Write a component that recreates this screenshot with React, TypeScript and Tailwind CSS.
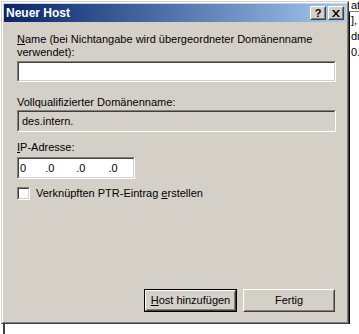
import React from 'react';

const font = "font-['Tahoma','Liberation_Sans',sans-serif]";

// Sunken 3D edit field (Win2000 look)
const Sunken: React.FC<{ className?: string; inner?: string; children?: React.ReactNode }> = ({
  className = '',
  inner = 'bg-white',
  children,
}) => (
  <div
    className={`border border-t-[#808080] border-l-[#808080] border-b-white border-r-white ${className}`}
  >
    <div
      className={`h-full w-full border border-t-[#404040] border-l-[#404040] border-b-[#d4d0c8] border-r-[#d4d0c8] ${inner}`}
    >
      {children}
    </div>
  </div>
);

const Raised: React.FC<{ className?: string; children?: React.ReactNode }> = ({ className = '', children }) => (
  <div
    className={`border border-t-white border-l-white border-b-[#404040] border-r-[#404040] bg-[#d4d0c8] ${className}`}
  >
    <div className="flex h-full w-full items-center justify-center border border-t-[#d4d0c8] border-l-[#d4d0c8] border-b-[#808080] border-r-[#808080]">
      {children}
    </div>
  </div>
);

const TitleButton: React.FC<{ children: React.ReactNode }> = ({ children }) => (
  <Raised className="h-[14px] w-[16px]">{children}</Raised>
);

export default function App() {
  return (
    <div className={`relative h-[334px] w-[359px] overflow-hidden bg-white text-[11px] text-black ${font}`}>
      <div className="flex">
        {/* dialog frame */}
        <div className="mt-[1px] ml-[1px] h-[323px] w-[348px] border border-t-[#d4d0c8] border-l-[#d4d0c8] border-b-[#404040] border-r-[#404040]">
          <div className="flex h-full w-full flex-col border border-t-white border-l-white border-b-[#808080] border-r-[#808080] bg-[#d4d0c8] p-[1px]">
            {/* title bar */}
            <div className="flex h-[18px] items-center bg-gradient-to-r from-[#0a246a] to-[#a6caf0] pl-[2px] pr-[2px]">
              <span className="text-[12px] font-bold text-white">Neuer Host</span>
              <div className="ml-auto flex gap-[2px]">
                <TitleButton>
                  <span className="text-[11px] font-bold leading-none">?</span>
                </TitleButton>
                <TitleButton>
                  <svg width="8" height="7" viewBox="0 0 8 7">
                    <path d="M0 0h2l2 2.5L6 0h2L5 3.5 8 7H6L4 4.5 2 7H0l3-3.5z" fill="#000" />
                  </svg>
                </TitleButton>
              </div>
            </div>

            {/* body */}
            <div className="flex flex-1 flex-col pl-[13px] pr-[11px] pb-[9px]">
              <div className="mt-[11px] leading-[13px]">
                <span className="underline">N</span>ame (bei Nichtangabe wird übergeordneter Domänenname
                <br />
                verwendet):
              </div>
              <Sunken className="mt-[2px] h-[21px] w-[319px]" />

              <div className="mt-[14px] leading-[13px]">Vollqualifizierter Domänenname:</div>
              <Sunken className="mt-[1px] h-[22px] w-[319px]" inner="bg-[#d4d0c8] flex items-center pl-[3px]">
                des.intern.
              </Sunken>

              <div className="mt-[9px] leading-[13px]">
                <span className="underline">I</span>P-Adresse:
              </div>
              <Sunken className="mt-[3px] h-[22px] w-[118px]" inner="bg-white flex items-center">
                <span className="ml-[1px]">0</span>
                <span className="ml-[19px]">.0</span>
                <span className="ml-[22px]">.0</span>
                <span className="ml-[23px]">.0</span>
              </Sunken>

              <div className="mt-[8px] flex items-center gap-[6px]">
                <Sunken className="h-[13px] w-[13px]" />
                <span className="leading-[13px]">
                  Verknüpften PTR-Eintrag <span className="underline">e</span>rstellen
                </span>
              </div>

              <div className="mt-auto flex justify-end gap-[6px]">
                <div className="h-[23px] w-[93px] border border-black">
                  <Raised className="h-full w-full">
                    <span>
                      <span className="underline">H</span>ost hinzufügen
                    </span>
                  </Raised>
                </div>
                <Raised className="h-[23px] w-[92px]">Fertig</Raised>
              </div>
            </div>
          </div>
        </div>

        {/* window behind, on the right */}
        <div className="flex w-[10px] flex-col overflow-hidden text-[11px] leading-[13px]">
          <div className="h-[12px] border-b border-[#808080] pl-[2px] leading-[11px]">ate</div>
          <div className="flex-1 border-l border-black pl-[1px] pt-[2px]">
            <div>],</div>
            <div className="mt-[3px]">dm</div>
            <div className="mt-[3px]">0.</div>
          </div>
        </div>
      </div>
      <div className="ml-[3px] h-[10px] w-[2px] bg-[#404040]" />
    </div>
  );
}
